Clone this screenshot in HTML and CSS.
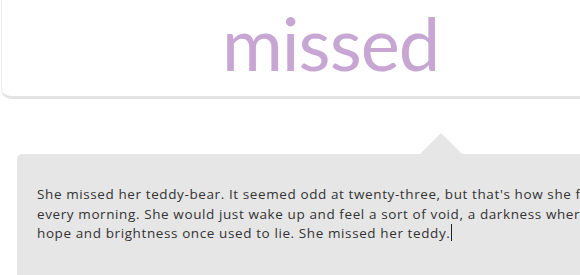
FILE: index.html
```html
<!DOCTYPE html>
<html lang="en">
  <head>
    <meta charset="UTF-8" />
    <title>missed</title>
    <link rel="stylesheet" href="styles.css">
  </head>
  <body>
    <div class="header">
      <h1 class="word">missed</h1>
    </div>

    <div class="entry">
      <p class="entry-text">She missed her teddy-bear. It seemed odd at twenty-three, but that's how she felt<br>
        every morning. She would just wake up and feel a sort of void, a darkness where<br>
        hope and brightness once used to lie. She missed her teddy.<span class="caret"></span></p>
    </div>
  </body>
</html>
```

FILE: styles.css
```css
/* Base */
* {
  box-sizing: border-box;
}
body {
  margin: 0;
  background-color: #fff;
  overflow: hidden;
  width: 580px;
  height: 275px;
}

/* Header */
.header {
  width: 720px;
  height: 99px;
  margin-left: 1px;
  padding: 0 0 0 220px;
  background-color: #fff;
  border-left: 1px solid #ededed;
  border-bottom: 3px solid #e4e4e4;
  border-bottom-left-radius: 10px;
}
.word {
  display: inline-block;
  margin: -1px 0 0;
  font-family: Lato, sans-serif;
  font-weight: normal;
  font-size: 74px;
  letter-spacing: -1px;
  line-height: 1.2;
  color: #c8a6d4;
}

/* Entry panel */
.entry {
  position: relative;
  width: 760px;
  height: 140px;
  margin: 55px 0 0 17px;
  padding: 31px 20px 0;
  background-color: #e6e6e6;
  border-radius: 5px;
}
.entry::before {
  content: "";
  position: absolute;
  top: -21px;
  left: 403px;
  border-left: 21px solid transparent;
  border-right: 21px solid transparent;
  border-bottom: 21px solid #e6e6e6;
}
.entry-text {
  margin: 0;
  font-family: "Open Sans", sans-serif;
  font-size: 13.5px;
  letter-spacing: 0.6px;
  line-height: 19.5px;
  color: #333;
  white-space: nowrap;
}
.caret {
  display: inline-block;
  width: 1px;
  height: 17px;
  margin-left: 1px;
  vertical-align: -3px;
  background-color: #222;
}
```
